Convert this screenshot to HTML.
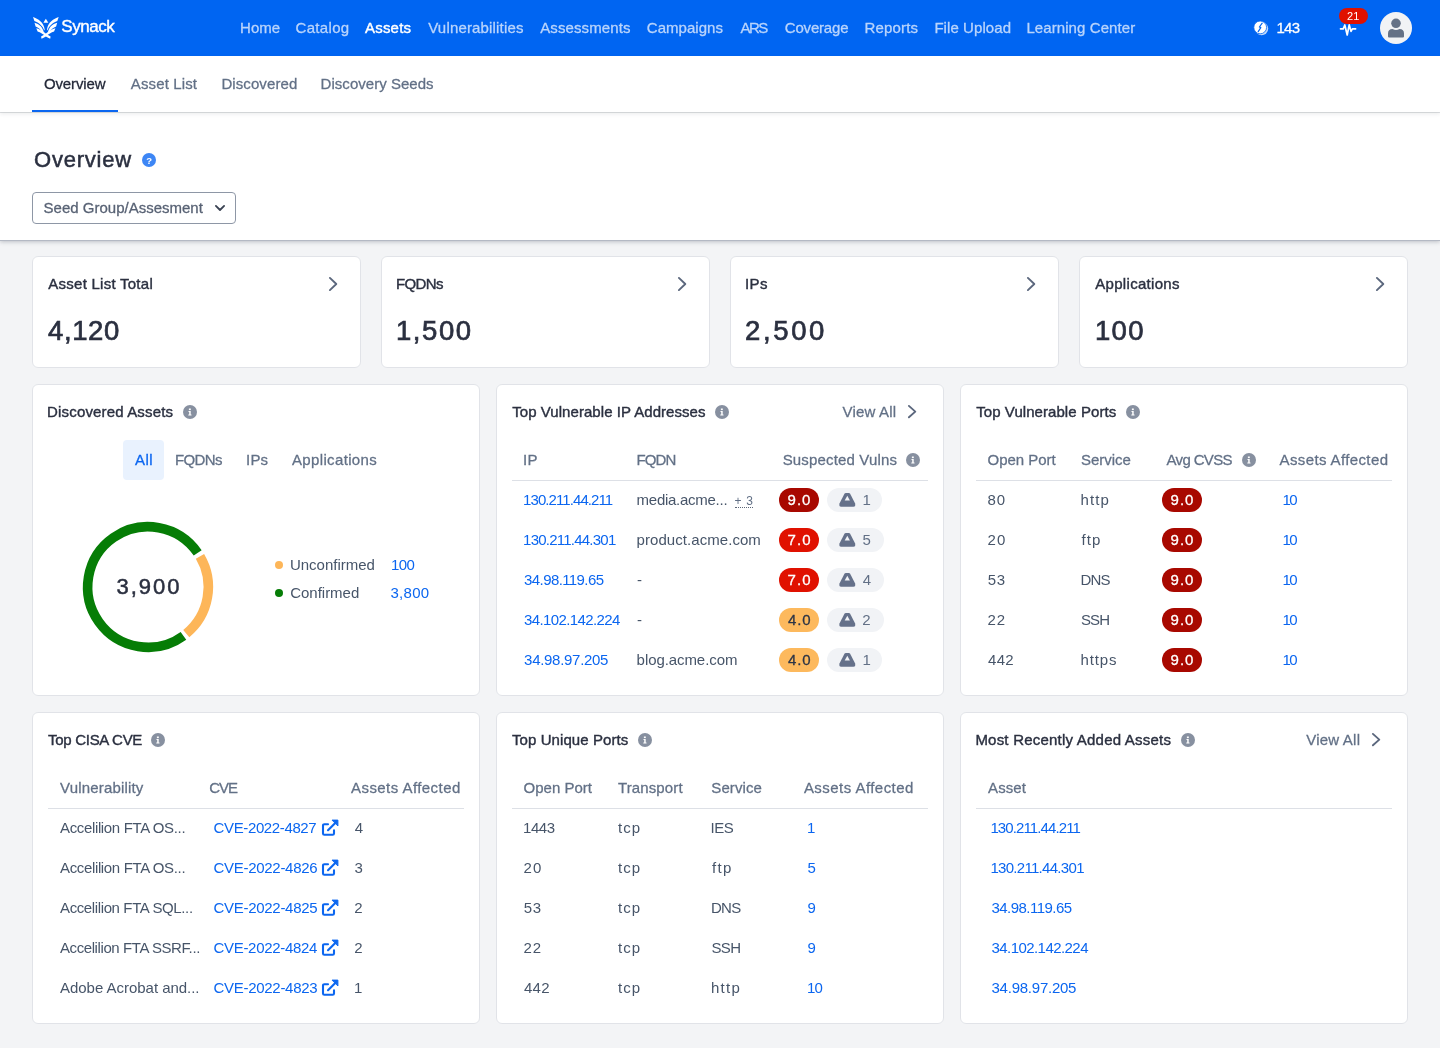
<!DOCTYPE html>
<html lang="en">
<head>
<meta charset="utf-8">
<title>Synack - Assets Overview</title>
<style>
*{box-sizing:border-box;margin:0;padding:0}
html,body{width:1440px;height:1048px;overflow:hidden}
body{background:#f3f4f6;font-family:"Liberation Sans",Arial,sans-serif;font-size:15px;color:#475569;position:relative}
a{text-decoration:none}
.t,.abs{position:absolute;white-space:pre}
#topnav{position:absolute;left:0;top:0;width:1440px;height:56px;background:#0065f2}
#subnav{position:absolute;left:0;top:56px;width:1440px;height:56px;background:#fff;box-shadow:0 1px 0 rgba(30,40,60,.14),0 2px 4px rgba(30,40,60,.09)}
#pagehead{position:absolute;left:0;top:112px;width:1440px;height:128px;background:#fff;box-shadow:0 1px 0 #b4b9c4,0 2px 4px rgba(30,40,60,.25)}
.card{position:absolute;background:#fff;border:1px solid #e1e3e8;border-radius:6px}
.hr{position:absolute;height:1px;background:#dde0e6}
.pill{position:absolute;height:24px;border-radius:12px}
#root{position:absolute;left:0;top:0;width:1440px;height:1048px;will-change:transform}
.info{position:absolute;width:14px;height:14px}
</style>
</head>
<body>
<div id="root">
<div id="topnav"></div>
<svg class="abs" style="left:33px;top:17px" width="26" height="22" viewBox="0 0 26 22" fill="#fff">
<g id="wing">
<path d="M0,0 C5,1.600 10.800,5.400 11.700,12.400 L11.300,13.600 C9.800,8.800 6,5.800 1.400,4 Z"/>
<path d="M1.500,5.800 C5.200,6.600 9,9.200 10.700,14.600 L9.600,16 C7.800,12.400 5.400,10.400 2.600,9.400 Z"/>
<path d="M3.300,11.200 C6.400,12 10,14.200 13.400,17 L17.600,19.600 L17.200,21.800 L14.600,20.400 L12.850,19.400 C10.200,17.200 7.400,15.600 4.600,14.600 Z"/>
</g>
<g transform="translate(25.700,0) scale(-1,1)">
<path d="M0,0 C5,1.600 10.800,5.400 11.700,12.400 L11.300,13.600 C9.800,8.800 6,5.800 1.400,4 Z"/>
<path d="M1.500,5.800 C5.200,6.600 9,9.200 10.700,14.600 L9.600,16 C7.800,12.400 5.400,10.400 2.600,9.400 Z"/>
<path d="M3.300,11.200 C6.400,12 10,14.200 13.400,17 L17.600,19.600 L17.200,21.800 L14.600,20.400 L12.850,19.400 C10.200,17.200 7.400,15.600 4.600,14.600 Z"/>
</g>
<path d="M12.850,1.800 L15.300,5.700 L10.400,5.700 Z"/>
</svg>
<span class="t" style="left:61.25px;top:15.71px;line-height:22px;letter-spacing:-0.425px;font-size:17px;color:#fff;-webkit-text-stroke:.4px;">Synack</span>
<span class="t" style="left:240.12px;top:17.80px;line-height:20px;color:#b9d4fc;-webkit-text-stroke:.3px;">Home</span>
<span class="t" style="left:295.50px;top:17.80px;line-height:20px;letter-spacing:0.333px;color:#b9d4fc;-webkit-text-stroke:.3px;">Catalog</span>
<span class="t" style="left:365.00px;top:17.80px;line-height:20px;letter-spacing:0.200px;color:#fff;-webkit-text-stroke:.4px;">Assets</span>
<span class="t" style="left:428.25px;top:17.80px;line-height:20px;letter-spacing:0.169px;color:#b9d4fc;-webkit-text-stroke:.3px;">Vulnerabilities</span>
<span class="t" style="left:540.25px;top:17.80px;line-height:20px;letter-spacing:0.099px;color:#b9d4fc;-webkit-text-stroke:.3px;">Assessments</span>
<span class="t" style="left:646.75px;top:17.80px;line-height:20px;letter-spacing:0.046px;color:#b9d4fc;-webkit-text-stroke:.3px;">Campaigns</span>
<span class="t" style="left:740.50px;top:17.80px;line-height:20px;letter-spacing:-1.600px;color:#b9d4fc;-webkit-text-stroke:.3px;">ARS</span>
<span class="t" style="left:784.75px;top:17.80px;line-height:20px;letter-spacing:-0.180px;color:#b9d4fc;-webkit-text-stroke:.3px;">Coverage</span>
<span class="t" style="left:864.38px;top:17.80px;line-height:20px;letter-spacing:0.186px;color:#b9d4fc;-webkit-text-stroke:.3px;">Reports</span>
<span class="t" style="left:934.38px;top:17.80px;line-height:20px;letter-spacing:0.074px;color:#b9d4fc;-webkit-text-stroke:.3px;">File Upload</span>
<span class="t" style="left:1026.38px;top:17.80px;line-height:20px;letter-spacing:0.089px;color:#b9d4fc;-webkit-text-stroke:.3px;">Learning Center</span>
<svg class="abs" style="left:1253px;top:20px" width="16" height="16" viewBox="0 0 16 16">
<circle cx="8.6" cy="8.6" r="6.6" fill="#fff" opacity=".75"/>
<circle cx="7.2" cy="7.4" r="6.4" fill="#fff" stroke="#0065f2" stroke-width=".8"/>
<path d="M9.200,3.200 L6.400,7 L7.800,7.600 L5.200,11.600" fill="none" stroke="#0065f2" stroke-width="1.200" stroke-linecap="round" stroke-linejoin="round"/>
</svg>
<span class="t" style="left:1276.38px;top:17.80px;line-height:20px;letter-spacing:-0.628px;color:#fff;-webkit-text-stroke:.28px;">143</span>
<svg class="abs" style="left:1339px;top:20px" width="18" height="18" viewBox="0 0 18 18" fill="none" stroke="#fff" stroke-width="1.700" stroke-linejoin="round" stroke-linecap="round">
<path d="M1.500,8.800 L4.200,8.800 L5.800,5 L8.200,15 L10.200,4.800 L12,11.400 L13.400,8.800 L16.600,8.800"/>
</svg>
<span class="abs" style="left:1339px;top:8px;width:29px;height:16px;border-radius:8px;background:#e01100"></span>
<span class="t" style="left:1347.00px;top:6.19px;line-height:20px;letter-spacing:0.234px;font-size:11px;color:#fff;">21</span>
<svg class="abs" style="left:1380px;top:12px" width="32" height="32" viewBox="0 0 32 32">
<circle cx="16" cy="16" r="16" fill="#f1f3f5"/>
<circle cx="16" cy="11.300" r="4.800" fill="#657286"/>
<path d="M8,24.400 V21.500 Q8,17 12.500,17 Q16,18.800 19.500,17 Q24,17 24,21.500 V24.400 Q24,25.400 23,25.400 H9 Q8,25.400 8,24.400 Z" fill="#657286"/>
</svg>
<div id="pagehead"></div>
<div id="subnav"></div>
<span class="t" style="left:43.88px;top:74.00px;line-height:20px;letter-spacing:-0.126px;color:#232838;-webkit-text-stroke:.28px;">Overview</span>
<span class="t" style="left:130.75px;top:74.00px;line-height:20px;letter-spacing:0.138px;color:#627086;-webkit-text-stroke:.28px;">Asset List</span>
<span class="t" style="left:221.38px;top:74.00px;line-height:20px;letter-spacing:0.097px;color:#627086;-webkit-text-stroke:.28px;">Discovered</span>
<span class="t" style="left:320.62px;top:74.00px;line-height:20px;letter-spacing:0.027px;color:#627086;-webkit-text-stroke:.28px;">Discovery Seeds</span>
<div class="abs" style="left:32px;top:110px;width:86px;height:2px;background:#0b66f0"></div>
<h1 class="t" style="left:34.00px;top:144.88px;line-height:29px;letter-spacing:0.786px;font-size:22px;color:#2b3040;font-weight:normal;-webkit-text-stroke:.5px;">Overview</h1>
<span class="abs" style="left:142px;top:153px;width:14px;height:14px;border-radius:50%;background:#3d86f5"></span>
<span class="t" style="left:146.22px;top:150.71px;line-height:20px;font-size:9.5px;color:#fff;font-weight:bold;">?</span>
<div class="abs" style="left:32px;top:192px;width:204px;height:32px;border:1px solid #8e97a6;border-radius:4px;background:#fff"></div>
<span class="t" style="left:43.62px;top:197.80px;line-height:20px;color:#586274;-webkit-text-stroke:.28px;">Seed Group/Assesment</span>
<svg class="abs" style="left:213px;top:203px" width="14" height="10" viewBox="0 0 14 10" fill="none" stroke="#3a4252" stroke-width="1.800" stroke-linecap="round" stroke-linejoin="round"><path d="M2.900,2.900 L7,7 L11.100,2.900"/></svg>
<div class="card" style="left:32px;top:256px;width:329px;height:112px"></div>
<span class="t" style="left:48.25px;top:273.80px;line-height:20px;letter-spacing:0.258px;color:#2b3040;-webkit-text-stroke:.4px;">Asset List Total</span>
<span class="t" style="left:48.12px;top:313.47px;line-height:36px;letter-spacing:0.592px;font-size:27.5px;color:#2b3040;-webkit-text-stroke:.7px;">4,120</span>
<svg class="abs" style="left:327px;top:275px" width="13" height="18" viewBox="0 0 13 18" fill="none" stroke="#5b677d" stroke-width="1.900" stroke-linecap="round" stroke-linejoin="round"><path d="M2.900,2.90 L9.300,9.00 L2.900,15.10"/></svg>
<div class="card" style="left:381px;top:256px;width:329px;height:112px"></div>
<span class="t" style="left:396.12px;top:273.80px;line-height:20px;letter-spacing:-0.658px;color:#2b3040;-webkit-text-stroke:.4px;">FQDNs</span>
<span class="t" style="left:396.00px;top:313.47px;line-height:36px;letter-spacing:1.561px;font-size:27.5px;color:#2b3040;-webkit-text-stroke:.7px;">1,500</span>
<svg class="abs" style="left:676px;top:275px" width="13" height="18" viewBox="0 0 13 18" fill="none" stroke="#5b677d" stroke-width="1.900" stroke-linecap="round" stroke-linejoin="round"><path d="M2.900,2.90 L9.300,9.00 L2.900,15.10"/></svg>
<div class="card" style="left:730px;top:256px;width:329px;height:112px"></div>
<span class="t" style="left:744.88px;top:273.80px;line-height:20px;letter-spacing:0.493px;color:#2b3040;-webkit-text-stroke:.4px;">IPs</span>
<span class="t" style="left:745.12px;top:313.47px;line-height:36px;letter-spacing:2.600px;font-size:27.5px;color:#2b3040;-webkit-text-stroke:.7px;">2,500</span>
<svg class="abs" style="left:1025px;top:275px" width="13" height="18" viewBox="0 0 13 18" fill="none" stroke="#5b677d" stroke-width="1.900" stroke-linecap="round" stroke-linejoin="round"><path d="M2.900,2.90 L9.300,9.00 L2.900,15.10"/></svg>
<div class="card" style="left:1079px;top:256px;width:329px;height:112px"></div>
<span class="t" style="left:1095.25px;top:273.80px;line-height:20px;letter-spacing:0.306px;color:#2b3040;-webkit-text-stroke:.4px;">Applications</span>
<span class="t" style="left:1095.00px;top:313.47px;line-height:36px;letter-spacing:1.310px;font-size:27.5px;color:#2b3040;-webkit-text-stroke:.7px;">100</span>
<svg class="abs" style="left:1374px;top:275px" width="13" height="18" viewBox="0 0 13 18" fill="none" stroke="#5b677d" stroke-width="1.900" stroke-linecap="round" stroke-linejoin="round"><path d="M2.900,2.90 L9.300,9.00 L2.900,15.10"/></svg>
<div class="card" style="left:32px;top:384px;width:448px;height:312px"></div>
<span class="t" style="left:47.12px;top:401.80px;line-height:20px;letter-spacing:0.156px;color:#2b3040;-webkit-text-stroke:.4px;">Discovered Assets</span>
<svg class="info" style="left:183px;top:405px" viewBox="0 0 14 14"><circle cx="7" cy="7" r="7" fill="#8790a0"/><rect x="5.900" y="3.500" width="1.900" height="1.600" fill="#fff"/><path d="M5.500,5.900 H7.700 V9.400 H8.500 V10.600 H5.300 V9.400 H6.200 V6.900 H5.500 Z" fill="#fff"/></svg>
<span class="abs" style="left:123px;top:440px;width:41px;height:40px;border-radius:4px;background:#e9f2fe"></span>
<span class="t" style="left:135.00px;top:449.80px;line-height:20px;letter-spacing:0.499px;color:#0b66f0;-webkit-text-stroke:.28px;">All</span>
<span class="t" style="left:175.12px;top:449.80px;line-height:20px;letter-spacing:-0.658px;color:#627086;-webkit-text-stroke:.28px;">FQDNs</span>
<span class="t" style="left:246.12px;top:449.80px;line-height:20px;letter-spacing:0.118px;color:#627086;-webkit-text-stroke:.28px;">IPs</span>
<span class="t" style="left:292.00px;top:449.80px;line-height:20px;letter-spacing:0.351px;color:#627086;-webkit-text-stroke:.28px;">Applications</span>
<svg class="abs" style="left:78px;top:517px" width="140" height="140" viewBox="-70 -70 140 140" fill="none" stroke-width="9.600"><path stroke="#067d06" d="M35.44,48.78 A60.3,60.3 0 1 1 49.69,-34.15"/><path stroke="#fdb659" d="M51.96,-30.60 A60.3,60.3 0 0 1 38.27,46.60"/></svg>
<span class="t" style="left:116.45px;top:572.18px;line-height:29px;letter-spacing:1.968px;font-size:22px;color:#2b3040;-webkit-text-stroke:.5px;">3,900</span>
<span class="abs" style="left:275px;top:561px;width:8px;height:8px;border-radius:50%;background:#fdb659"></span>
<span class="t" style="left:289.88px;top:554.80px;line-height:20px;">Unconfirmed</span>
<a class="t" style="left:390.88px;top:554.80px;line-height:20px;letter-spacing:-0.540px;color:#0b66f0;">100</a>
<span class="abs" style="left:275px;top:589px;width:8px;height:8px;border-radius:50%;background:#067d06"></span>
<span class="t" style="left:290.25px;top:582.80px;line-height:20px;letter-spacing:-0.026px;">Confirmed</span>
<a class="t" style="left:390.50px;top:582.80px;line-height:20px;letter-spacing:0.266px;color:#0b66f0;">3,800</a>
<div class="card" style="left:496px;top:384px;width:448px;height:312px"></div>
<span class="t" style="left:512.25px;top:401.80px;line-height:20px;letter-spacing:0.057px;color:#2b3040;-webkit-text-stroke:.4px;">Top Vulnerable IP Addresses</span>
<svg class="info" style="left:715px;top:405px" viewBox="0 0 14 14"><circle cx="7" cy="7" r="7" fill="#8790a0"/><rect x="5.900" y="3.500" width="1.900" height="1.600" fill="#fff"/><path d="M5.500,5.900 H7.700 V9.400 H8.500 V10.600 H5.300 V9.400 H6.200 V6.900 H5.500 Z" fill="#fff"/></svg>
<span class="t" style="left:842.60px;top:401.80px;line-height:20px;letter-spacing:0.162px;color:#627086;-webkit-text-stroke:.28px;">View All</span>
<svg class="abs" style="left:906px;top:403.3px" width="13" height="17.2" viewBox="0 0 13 17.2" fill="none" stroke="#5b677d" stroke-width="1.900" stroke-linecap="round" stroke-linejoin="round"><path d="M2.900,2.90 L9.300,8.60 L2.900,14.30"/></svg>
<span class="t" style="left:523.12px;top:449.80px;line-height:20px;letter-spacing:0.236px;color:#627086;-webkit-text-stroke:.28px;">IP</span>
<span class="t" style="left:636.38px;top:449.80px;line-height:20px;letter-spacing:-0.877px;color:#627086;-webkit-text-stroke:.28px;">FQDN</span>
<span class="t" style="left:782.67px;top:449.80px;line-height:20px;letter-spacing:0.158px;color:#627086;-webkit-text-stroke:.28px;">Suspected Vulns</span>
<svg class="info" style="left:906px;top:453px" viewBox="0 0 14 14"><circle cx="7" cy="7" r="7" fill="#8790a0"/><rect x="5.900" y="3.500" width="1.900" height="1.600" fill="#fff"/><path d="M5.500,5.900 H7.700 V9.400 H8.500 V10.600 H5.300 V9.400 H6.200 V6.900 H5.500 Z" fill="#fff"/></svg>
<div class="hr" style="left:512px;top:480px;width:416px"></div>
<a class="t" style="left:523.12px;top:490.30px;line-height:20px;letter-spacing:-0.924px;color:#0b66f0;">130.211.44.211</a>
<span class="t" style="left:636.62px;top:490.30px;line-height:20px;letter-spacing:-0.272px;">media.acme...</span>
<span class="t" style="left:734.50px;top:490.84px;line-height:20px;letter-spacing:0.688px;font-size:12px;color:#627086;">+ 3</span>
<span class="abs" style="left:735px;top:507px;width:18px;height:0;border-top:1px dotted #5b6577"></span>
<span class="pill" style="left:779px;top:488px;width:40px;background:#a80800"></span>
<span class="t" style="left:787.62px;top:490.30px;line-height:20px;letter-spacing:0.996px;color:#fff;-webkit-text-stroke:.28px;-webkit-text-stroke:.3px;">9.0</span>
<span class="pill" style="left:827px;top:488px;width:55px;background:#f1f3f6"></span>
<svg class="abs" style="left:838px;top:492px" width="18" height="16" viewBox="0 0 18 16"><path d="M7.800,0.900 H10.800 Q11.600,0.900 12,1.600 L17,11.200 Q18,14.800 15.400,14.800 H3.200 Q0.600,14.800 1.600,11.200 L6.600,1.600 Q7,0.900 7.800,0.900 Z" fill="#65718a"/><path d="M9.300,3.800 L11.900,8.500 L6.700,8.500 Z" fill="#f1f3f6"/></svg>
<span class="t" style="left:862.38px;top:490.30px;line-height:20px;color:#627086;">1</span>
<a class="t" style="left:523.12px;top:530.30px;line-height:20px;letter-spacing:-0.770px;color:#0b66f0;">130.211.44.301</a>
<span class="t" style="left:636.62px;top:530.30px;line-height:20px;letter-spacing:0.058px;">product.acme.com</span>
<span class="pill" style="left:779px;top:528px;width:40px;background:#e01100"></span>
<span class="t" style="left:787.50px;top:530.30px;line-height:20px;letter-spacing:1.059px;color:#fff;-webkit-text-stroke:.28px;-webkit-text-stroke:.3px;">7.0</span>
<span class="pill" style="left:827px;top:528px;width:57px;background:#f1f3f6"></span>
<svg class="abs" style="left:838px;top:532px" width="18" height="16" viewBox="0 0 18 16"><path d="M7.800,0.900 H10.800 Q11.600,0.900 12,1.600 L17,11.200 Q18,14.800 15.400,14.800 H3.200 Q0.600,14.800 1.600,11.200 L6.600,1.600 Q7,0.900 7.800,0.900 Z" fill="#65718a"/><path d="M9.300,3.800 L11.900,8.500 L6.700,8.500 Z" fill="#f1f3f6"/></svg>
<span class="t" style="left:862.50px;top:530.30px;line-height:20px;color:#627086;">5</span>
<a class="t" style="left:524.10px;top:570.30px;line-height:20px;letter-spacing:-0.599px;color:#0b66f0;">34.98.119.65</a>
<span class="t" style="left:636.88px;top:570.30px;line-height:20px;">-</span>
<span class="pill" style="left:779px;top:568px;width:40px;background:#e01100"></span>
<span class="t" style="left:787.50px;top:570.30px;line-height:20px;letter-spacing:1.059px;color:#fff;-webkit-text-stroke:.28px;-webkit-text-stroke:.3px;">7.0</span>
<span class="pill" style="left:827px;top:568px;width:57px;background:#f1f3f6"></span>
<svg class="abs" style="left:838px;top:572px" width="18" height="16" viewBox="0 0 18 16"><path d="M7.800,0.900 H10.800 Q11.600,0.900 12,1.600 L17,11.200 Q18,14.800 15.400,14.800 H3.200 Q0.600,14.800 1.600,11.200 L6.600,1.600 Q7,0.900 7.800,0.900 Z" fill="#65718a"/><path d="M9.300,3.800 L11.900,8.500 L6.700,8.500 Z" fill="#f1f3f6"/></svg>
<span class="t" style="left:862.75px;top:570.30px;line-height:20px;color:#627086;">4</span>
<a class="t" style="left:524.10px;top:610.30px;line-height:20px;letter-spacing:-0.615px;color:#0b66f0;">34.102.142.224</a>
<span class="t" style="left:636.88px;top:610.30px;line-height:20px;">-</span>
<span class="pill" style="left:779px;top:608px;width:40px;background:#fdb95d"></span>
<span class="t" style="left:788.00px;top:610.30px;line-height:20px;letter-spacing:0.809px;color:#2d3546;-webkit-text-stroke:.28px;-webkit-text-stroke:.3px;">4.0</span>
<span class="pill" style="left:827px;top:608px;width:57px;background:#f1f3f6"></span>
<svg class="abs" style="left:838px;top:612px" width="18" height="16" viewBox="0 0 18 16"><path d="M7.800,0.900 H10.800 Q11.600,0.900 12,1.600 L17,11.200 Q18,14.800 15.400,14.800 H3.200 Q0.600,14.800 1.600,11.200 L6.600,1.600 Q7,0.900 7.800,0.900 Z" fill="#65718a"/><path d="M9.300,3.800 L11.900,8.500 L6.700,8.500 Z" fill="#f1f3f6"/></svg>
<span class="t" style="left:862.25px;top:610.30px;line-height:20px;color:#627086;">2</span>
<a class="t" style="left:524.10px;top:650.30px;line-height:20px;letter-spacing:-0.292px;color:#0b66f0;">34.98.97.205</a>
<span class="t" style="left:636.62px;top:650.30px;line-height:20px;letter-spacing:-0.076px;">blog.acme.com</span>
<span class="pill" style="left:779px;top:648px;width:40px;background:#fdb95d"></span>
<span class="t" style="left:788.00px;top:650.30px;line-height:20px;letter-spacing:0.809px;color:#2d3546;-webkit-text-stroke:.28px;-webkit-text-stroke:.3px;">4.0</span>
<span class="pill" style="left:827px;top:648px;width:55px;background:#f1f3f6"></span>
<svg class="abs" style="left:838px;top:652px" width="18" height="16" viewBox="0 0 18 16"><path d="M7.800,0.900 H10.800 Q11.600,0.900 12,1.600 L17,11.200 Q18,14.800 15.400,14.800 H3.200 Q0.600,14.800 1.600,11.200 L6.600,1.600 Q7,0.900 7.800,0.900 Z" fill="#65718a"/><path d="M9.300,3.800 L11.900,8.500 L6.700,8.500 Z" fill="#f1f3f6"/></svg>
<span class="t" style="left:862.38px;top:650.30px;line-height:20px;color:#627086;">1</span>
<div class="card" style="left:960px;top:384px;width:448px;height:312px"></div>
<span class="t" style="left:976.25px;top:401.80px;line-height:20px;letter-spacing:0.065px;color:#2b3040;-webkit-text-stroke:.4px;">Top Vulnerable Ports</span>
<svg class="info" style="left:1126px;top:405px" viewBox="0 0 14 14"><circle cx="7" cy="7" r="7" fill="#8790a0"/><rect x="5.900" y="3.500" width="1.900" height="1.600" fill="#fff"/><path d="M5.500,5.900 H7.700 V9.400 H8.500 V10.600 H5.300 V9.400 H6.200 V6.900 H5.500 Z" fill="#fff"/></svg>
<span class="t" style="left:987.62px;top:449.80px;line-height:20px;letter-spacing:-0.031px;color:#627086;-webkit-text-stroke:.28px;">Open Port</span>
<span class="t" style="left:1080.88px;top:449.80px;line-height:20px;color:#627086;-webkit-text-stroke:.28px;">Service</span>
<span class="t" style="left:1166.50px;top:449.80px;line-height:20px;letter-spacing:-0.643px;color:#627086;-webkit-text-stroke:.28px;">Avg CVSS</span>
<svg class="info" style="left:1242px;top:453px" viewBox="0 0 14 14"><circle cx="7" cy="7" r="7" fill="#8790a0"/><rect x="5.900" y="3.500" width="1.900" height="1.600" fill="#fff"/><path d="M5.500,5.900 H7.700 V9.400 H8.500 V10.600 H5.300 V9.400 H6.200 V6.900 H5.500 Z" fill="#fff"/></svg>
<span class="t" style="left:1279.50px;top:449.80px;line-height:20px;letter-spacing:0.384px;color:#627086;-webkit-text-stroke:.28px;">Assets Affected</span>
<div class="hr" style="left:976px;top:480px;width:416px"></div>
<span class="t" style="left:987.62px;top:490.30px;line-height:20px;letter-spacing:0.871px;">80</span>
<span class="t" style="left:1080.50px;top:490.30px;line-height:20px;letter-spacing:1.121px;">http</span>
<span class="pill" style="left:1162px;top:488px;width:40px;background:#a80800"></span>
<span class="t" style="left:1170.62px;top:490.30px;line-height:20px;letter-spacing:0.996px;color:#fff;-webkit-text-stroke:.28px;-webkit-text-stroke:.3px;">9.0</span>
<a class="t" style="left:1282.38px;top:490.30px;line-height:20px;letter-spacing:-1.379px;color:#0b66f0;">10</a>
<span class="t" style="left:987.50px;top:530.30px;line-height:20px;letter-spacing:1.246px;">20</span>
<span class="t" style="left:1081.38px;top:530.30px;line-height:20px;letter-spacing:1.095px;">ftp</span>
<span class="pill" style="left:1162px;top:528px;width:40px;background:#a80800"></span>
<span class="t" style="left:1170.62px;top:530.30px;line-height:20px;letter-spacing:0.996px;color:#fff;-webkit-text-stroke:.28px;-webkit-text-stroke:.3px;">9.0</span>
<a class="t" style="left:1282.38px;top:530.30px;line-height:20px;letter-spacing:-1.379px;color:#0b66f0;">10</a>
<span class="t" style="left:987.75px;top:570.30px;line-height:20px;letter-spacing:0.621px;">53</span>
<span class="t" style="left:1080.38px;top:570.30px;line-height:20px;letter-spacing:-0.738px;">DNS</span>
<span class="pill" style="left:1162px;top:568px;width:40px;background:#a80800"></span>
<span class="t" style="left:1170.62px;top:570.30px;line-height:20px;letter-spacing:0.996px;color:#fff;-webkit-text-stroke:.28px;-webkit-text-stroke:.3px;">9.0</span>
<a class="t" style="left:1282.38px;top:570.30px;line-height:20px;letter-spacing:-1.379px;color:#0b66f0;">10</a>
<span class="t" style="left:987.50px;top:610.30px;line-height:20px;letter-spacing:0.996px;">22</span>
<span class="t" style="left:1080.88px;top:610.30px;line-height:20px;letter-spacing:-0.850px;">SSH</span>
<span class="pill" style="left:1162px;top:608px;width:40px;background:#a80800"></span>
<span class="t" style="left:1170.62px;top:610.30px;line-height:20px;letter-spacing:0.996px;color:#fff;-webkit-text-stroke:.28px;-webkit-text-stroke:.3px;">9.0</span>
<a class="t" style="left:1282.38px;top:610.30px;line-height:20px;letter-spacing:-1.379px;color:#0b66f0;">10</a>
<span class="t" style="left:988.00px;top:650.30px;line-height:20px;letter-spacing:0.322px;">442</span>
<span class="t" style="left:1080.50px;top:650.30px;line-height:20px;letter-spacing:0.872px;">https</span>
<span class="pill" style="left:1162px;top:648px;width:40px;background:#a80800"></span>
<span class="t" style="left:1170.62px;top:650.30px;line-height:20px;letter-spacing:0.996px;color:#fff;-webkit-text-stroke:.28px;-webkit-text-stroke:.3px;">9.0</span>
<a class="t" style="left:1282.38px;top:650.30px;line-height:20px;letter-spacing:-1.379px;color:#0b66f0;">10</a>
<div class="card" style="left:32px;top:712px;width:448px;height:312px"></div>
<span class="t" style="left:48.05px;top:729.80px;line-height:20px;letter-spacing:-0.293px;color:#2b3040;-webkit-text-stroke:.4px;">Top CISA CVE</span>
<svg class="info" style="left:151px;top:733px" viewBox="0 0 14 14"><circle cx="7" cy="7" r="7" fill="#8790a0"/><rect x="5.900" y="3.500" width="1.900" height="1.600" fill="#fff"/><path d="M5.500,5.900 H7.700 V9.400 H8.500 V10.600 H5.300 V9.400 H6.200 V6.900 H5.500 Z" fill="#fff"/></svg>
<span class="t" style="left:60.00px;top:777.80px;line-height:20px;letter-spacing:0.181px;color:#627086;-webkit-text-stroke:.28px;">Vulnerability</span>
<span class="t" style="left:209.25px;top:777.80px;line-height:20px;letter-spacing:-1.100px;color:#627086;-webkit-text-stroke:.28px;">CVE</span>
<span class="t" style="left:351.00px;top:777.80px;line-height:20px;letter-spacing:0.441px;color:#627086;-webkit-text-stroke:.28px;">Assets Affected</span>
<div class="hr" style="left:48px;top:808px;width:416px"></div>
<span class="t" style="left:60.00px;top:818.30px;line-height:20px;letter-spacing:-0.353px;">Accelilion FTA OS...</span>
<a class="t" style="left:213.55px;top:818.30px;line-height:20px;letter-spacing:-0.369px;color:#0b66f0;">CVE-2022-4827</a>
<svg class="abs" style="left:321px;top:819px" width="18" height="18" viewBox="0 0 18 18" fill="none" stroke="#0b66f0" stroke-width="2.100" stroke-linecap="round" stroke-linejoin="round"><path d="M7,5.200 H3.400 Q2,5.200 2,6.600 V14.400 Q2,15.800 3.400,15.800 H11.600 Q13,15.800 13,14.400 V11.400"/><path d="M7,11.200 L15,3.200"/><path d="M11.400,1.100 H16.900 V6.600 Z" fill="#0b66f0" stroke-width="1"/></svg>
<span class="t" style="left:354.75px;top:818.30px;line-height:20px;">4</span>
<span class="t" style="left:60.00px;top:858.30px;line-height:20px;letter-spacing:-0.353px;">Accelilion FTA OS...</span>
<a class="t" style="left:213.55px;top:858.30px;line-height:20px;letter-spacing:-0.296px;color:#0b66f0;">CVE-2022-4826</a>
<svg class="abs" style="left:321px;top:859px" width="18" height="18" viewBox="0 0 18 18" fill="none" stroke="#0b66f0" stroke-width="2.100" stroke-linecap="round" stroke-linejoin="round"><path d="M7,5.200 H3.400 Q2,5.200 2,6.600 V14.400 Q2,15.800 3.400,15.800 H11.600 Q13,15.800 13,14.400 V11.400"/><path d="M7,11.200 L15,3.200"/><path d="M11.400,1.100 H16.900 V6.600 Z" fill="#0b66f0" stroke-width="1"/></svg>
<span class="t" style="left:354.50px;top:858.30px;line-height:20px;">3</span>
<span class="t" style="left:60.00px;top:898.30px;line-height:20px;letter-spacing:-0.378px;">Accelilion FTA SQL...</span>
<a class="t" style="left:213.55px;top:898.30px;line-height:20px;letter-spacing:-0.296px;color:#0b66f0;">CVE-2022-4825</a>
<svg class="abs" style="left:321px;top:899px" width="18" height="18" viewBox="0 0 18 18" fill="none" stroke="#0b66f0" stroke-width="2.100" stroke-linecap="round" stroke-linejoin="round"><path d="M7,5.200 H3.400 Q2,5.200 2,6.600 V14.400 Q2,15.800 3.400,15.800 H11.600 Q13,15.800 13,14.400 V11.400"/><path d="M7,11.200 L15,3.200"/><path d="M11.400,1.100 H16.900 V6.600 Z" fill="#0b66f0" stroke-width="1"/></svg>
<span class="t" style="left:354.25px;top:898.30px;line-height:20px;">2</span>
<span class="t" style="left:60.00px;top:938.30px;line-height:20px;letter-spacing:-0.411px;">Accelilion FTA SSRF...</span>
<a class="t" style="left:213.55px;top:938.30px;line-height:20px;letter-spacing:-0.317px;color:#0b66f0;">CVE-2022-4824</a>
<svg class="abs" style="left:321px;top:939px" width="18" height="18" viewBox="0 0 18 18" fill="none" stroke="#0b66f0" stroke-width="2.100" stroke-linecap="round" stroke-linejoin="round"><path d="M7,5.200 H3.400 Q2,5.200 2,6.600 V14.400 Q2,15.800 3.400,15.800 H11.600 Q13,15.800 13,14.400 V11.400"/><path d="M7,11.200 L15,3.200"/><path d="M11.400,1.100 H16.900 V6.600 Z" fill="#0b66f0" stroke-width="1"/></svg>
<span class="t" style="left:354.25px;top:938.30px;line-height:20px;">2</span>
<span class="t" style="left:60.00px;top:978.30px;line-height:20px;letter-spacing:-0.030px;">Adobe Acrobat and...</span>
<a class="t" style="left:213.55px;top:978.30px;line-height:20px;letter-spacing:-0.296px;color:#0b66f0;">CVE-2022-4823</a>
<svg class="abs" style="left:321px;top:979px" width="18" height="18" viewBox="0 0 18 18" fill="none" stroke="#0b66f0" stroke-width="2.100" stroke-linecap="round" stroke-linejoin="round"><path d="M7,5.200 H3.400 Q2,5.200 2,6.600 V14.400 Q2,15.800 3.400,15.800 H11.600 Q13,15.800 13,14.400 V11.400"/><path d="M7,11.200 L15,3.200"/><path d="M11.400,1.100 H16.900 V6.600 Z" fill="#0b66f0" stroke-width="1"/></svg>
<span class="t" style="left:353.88px;top:978.30px;line-height:20px;">1</span>
<div class="card" style="left:496px;top:712px;width:448px;height:312px"></div>
<span class="t" style="left:512.05px;top:729.80px;line-height:20px;letter-spacing:0.074px;color:#2b3040;-webkit-text-stroke:.4px;">Top Unique Ports</span>
<svg class="info" style="left:638px;top:733px" viewBox="0 0 14 14"><circle cx="7" cy="7" r="7" fill="#8790a0"/><rect x="5.900" y="3.500" width="1.900" height="1.600" fill="#fff"/><path d="M5.500,5.900 H7.700 V9.400 H8.500 V10.600 H5.300 V9.400 H6.200 V6.900 H5.500 Z" fill="#fff"/></svg>
<span class="t" style="left:523.58px;top:777.80px;line-height:20px;color:#627086;-webkit-text-stroke:.28px;">Open Port</span>
<span class="t" style="left:617.95px;top:777.80px;line-height:20px;letter-spacing:0.127px;color:#627086;-webkit-text-stroke:.28px;">Transport</span>
<span class="t" style="left:711.27px;top:777.80px;line-height:20px;letter-spacing:0.106px;color:#627086;-webkit-text-stroke:.28px;">Service</span>
<span class="t" style="left:803.90px;top:777.80px;line-height:20px;letter-spacing:0.455px;color:#627086;-webkit-text-stroke:.28px;">Assets Affected</span>
<div class="hr" style="left:512px;top:808px;width:416px"></div>
<span class="t" style="left:523.08px;top:818.30px;line-height:20px;letter-spacing:-0.478px;">1443</span>
<span class="t" style="left:618.08px;top:818.30px;line-height:20px;letter-spacing:1.022px;">tcp</span>
<span class="t" style="left:710.62px;top:818.30px;line-height:20px;letter-spacing:-0.516px;">IES</span>
<a class="t" style="left:806.88px;top:818.30px;line-height:20px;color:#0b66f0;">1</a>
<span class="t" style="left:523.45px;top:858.30px;line-height:20px;letter-spacing:1.096px;">20</span>
<span class="t" style="left:618.08px;top:858.30px;line-height:20px;letter-spacing:1.022px;">tcp</span>
<span class="t" style="left:711.88px;top:858.30px;line-height:20px;letter-spacing:1.395px;">ftp</span>
<a class="t" style="left:807.50px;top:858.30px;line-height:20px;color:#0b66f0;">5</a>
<span class="t" style="left:523.70px;top:898.30px;line-height:20px;letter-spacing:0.671px;">53</span>
<span class="t" style="left:618.08px;top:898.30px;line-height:20px;letter-spacing:1.022px;">tcp</span>
<span class="t" style="left:710.88px;top:898.30px;line-height:20px;letter-spacing:-0.588px;">DNS</span>
<a class="t" style="left:807.38px;top:898.30px;line-height:20px;color:#0b66f0;">9</a>
<span class="t" style="left:523.45px;top:938.30px;line-height:20px;letter-spacing:1.046px;">22</span>
<span class="t" style="left:618.08px;top:938.30px;line-height:20px;letter-spacing:1.022px;">tcp</span>
<span class="t" style="left:711.38px;top:938.30px;line-height:20px;letter-spacing:-0.600px;">SSH</span>
<a class="t" style="left:807.38px;top:938.30px;line-height:20px;color:#0b66f0;">9</a>
<span class="t" style="left:523.95px;top:978.30px;line-height:20px;letter-spacing:0.297px;">442</span>
<span class="t" style="left:618.08px;top:978.30px;line-height:20px;letter-spacing:1.022px;">tcp</span>
<span class="t" style="left:711.00px;top:978.30px;line-height:20px;letter-spacing:1.238px;">http</span>
<a class="t" style="left:806.88px;top:978.30px;line-height:20px;letter-spacing:-0.729px;color:#0b66f0;">10</a>
<div class="card" style="left:960px;top:712px;width:448px;height:312px"></div>
<span class="t" style="left:975.38px;top:729.80px;line-height:20px;letter-spacing:0.220px;color:#2b3040;-webkit-text-stroke:.4px;">Most Recently Added Assets</span>
<svg class="info" style="left:1181px;top:733px" viewBox="0 0 14 14"><circle cx="7" cy="7" r="7" fill="#8790a0"/><rect x="5.900" y="3.500" width="1.900" height="1.600" fill="#fff"/><path d="M5.500,5.900 H7.700 V9.400 H8.500 V10.600 H5.300 V9.400 H6.200 V6.900 H5.500 Z" fill="#fff"/></svg>
<span class="t" style="left:1306.20px;top:729.80px;line-height:20px;letter-spacing:0.219px;color:#627086;-webkit-text-stroke:.28px;">View All</span>
<svg class="abs" style="left:1370px;top:731.3px" width="13" height="17.2" viewBox="0 0 13 17.2" fill="none" stroke="#5b677d" stroke-width="1.900" stroke-linecap="round" stroke-linejoin="round"><path d="M2.900,2.90 L9.300,8.60 L2.900,14.30"/></svg>
<span class="t" style="left:988.10px;top:777.80px;line-height:20px;letter-spacing:0.075px;color:#627086;-webkit-text-stroke:.28px;">Asset</span>
<div class="hr" style="left:976px;top:808px;width:416px"></div>
<a class="t" style="left:990.38px;top:818.30px;line-height:20px;letter-spacing:-0.882px;color:#0b66f0;">130.211.44.211</a>
<a class="t" style="left:990.38px;top:858.30px;line-height:20px;letter-spacing:-0.697px;color:#0b66f0;">130.211.44.301</a>
<a class="t" style="left:991.50px;top:898.30px;line-height:20px;letter-spacing:-0.536px;color:#0b66f0;">34.98.119.65</a>
<a class="t" style="left:991.50px;top:938.30px;line-height:20px;letter-spacing:-0.561px;color:#0b66f0;">34.102.142.224</a>
<a class="t" style="left:991.50px;top:978.30px;line-height:20px;letter-spacing:-0.238px;color:#0b66f0;">34.98.97.205</a>
</div>
</body>
</html>
